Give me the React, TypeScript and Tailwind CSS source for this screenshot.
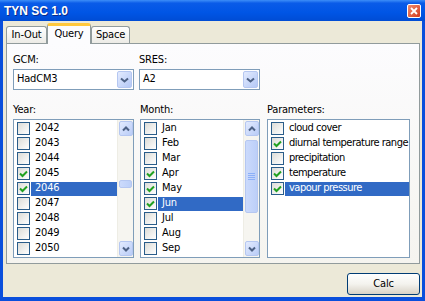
import React from 'react';

const years = [
  { label: '2042' },
  { label: '2043' },
  { label: '2044' },
  { label: '2045', checked: true },
  { label: '2046', checked: true, selected: true },
  { label: '2047' },
  { label: '2048' },
  { label: '2049' },
  { label: '2050' },
];

const months = [
  { label: 'Jan' },
  { label: 'Feb' },
  { label: 'Mar' },
  { label: 'Apr', checked: true },
  { label: 'May', checked: true },
  { label: 'Jun', checked: true, selected: true },
  { label: 'Jul' },
  { label: 'Aug' },
  { label: 'Sep' },
];

const params = [
  { label: 'cloud cover' },
  { label: 'diurnal temperature range', checked: true },
  { label: 'precipitation' },
  { label: 'temperature', checked: true },
  { label: 'vapour pressure', checked: true, selected: true },
];

type Item = { label: string; checked?: boolean; selected?: boolean };

function CheckBox({ checked }: { checked?: boolean }) {
  return (
    <div className="w-[13px] h-[13px] shrink-0 border border-[#2a5d8a] bg-gradient-to-br from-[#dcdcd7] to-white flex items-center justify-center">
      {checked && (
        <svg width="11" height="11" viewBox="0 0 11 11">
          <path d="M2 5.5 L4.5 8 L9 3.5" stroke="#21a121" strokeWidth="2" fill="none" />
        </svg>
      )}
    </div>
  );
}

function Row({ item }: { item: Item }) {
  return (
    <div className="h-[15px] flex items-center pl-[3px]">
      <CheckBox checked={item.checked} />
      <div
        className={
          item.selected
            ? 'ml-[1px] flex-1 h-[14px] pl-[4px] flex items-center bg-[#316ac5] text-white whitespace-nowrap'
            : 'ml-[1px] flex-1 h-[14px] pl-[4px] flex items-center whitespace-nowrap'
        }
      >
        {item.label}
      </div>
    </div>
  );
}

function ArrowBtn({ down }: { down?: boolean }) {
  return (
    <div className="h-[17px] w-[16px] p-px shrink-0">
      <div className="h-full w-full rounded-[2px] border border-[#b5c7f1] bg-gradient-to-br from-[#e3ebfe] to-[#b9ccf7] flex items-center justify-center">
        <svg width="8" height="6" viewBox="0 0 8 6">
          <path d={down ? 'M1 1.5 L4 4.5 L7 1.5' : 'M1 4.5 L4 1.5 L7 4.5'} stroke="#4d6185" strokeWidth="2" fill="none" />
        </svg>
      </div>
    </div>
  );
}

function ScrollBar({ thumb, grip }: { thumb: string; grip?: boolean }) {
  return (
    <div className="w-[16px] flex flex-col bg-[#f6f5f0] border-l border-[#eeede5]">
      <ArrowBtn />
      <div className="flex-1 px-px">
        <div className={thumb + ' rounded-[2px] border border-[#b5c7f1] bg-gradient-to-r from-[#cbdafc] to-[#bccff8] flex flex-col items-center justify-center gap-px'}>
          {grip && (
            <>
              <div className="w-[7px] h-px bg-[#8cb0f8]" />
              <div className="w-[7px] h-px bg-[#8cb0f8]" />
              <div className="w-[7px] h-px bg-[#8cb0f8]" />
              <div className="w-[7px] h-px bg-[#8cb0f8]" />
            </>
          )}
        </div>
      </div>
      <ArrowBtn down />
    </div>
  );
}

function ListBox({ items, width, scroll }: { items: Item[]; width: string; scroll?: React.ReactNode }) {
  return (
    <div className={width + ' h-[139px] border border-[#7f9db9] bg-white flex'}>
      <div className="flex-1 py-px min-w-0">
        {items.map((it) => (
          <Row key={it.label} item={it} />
        ))}
      </div>
      {scroll}
    </div>
  );
}

function Combo({ value }: { value: string }) {
  return (
    <div className="w-[121px] h-[21px] border border-[#7f9db9] bg-white flex items-center">
      <div className="flex-1 pl-[3px]">{value}</div>
      <div className="h-[19px] w-[17px] p-px">
        <div className="h-full w-full rounded-[2px] border border-[#b5c7f1] bg-gradient-to-br from-[#e3ebfe] to-[#b4c8f6] flex items-center justify-center">
          <svg width="9" height="6" viewBox="0 0 9 6">
            <path d="M1 1.5 L4.5 4.5 L8 1.5" stroke="#4d6185" strokeWidth="2" fill="none" />
          </svg>
        </div>
      </div>
    </div>
  );
}

export default function App() {
  return (
    <div className="w-[425px] h-[301px] flex flex-col bg-[#0a4fdc] text-[11px] tracking-[-0.2px] text-black font-['DejaVu_Sans_Condensed','Liberation_Sans',sans-serif] select-none">
      {/* title bar */}
      <div className="h-[21px] shrink-0 flex items-center pl-[4px] pr-[4px] bg-[linear-gradient(to_bottom,#3d8ef8_0%,#0a5be8_15%,#0055e5_60%,#004cd4_100%)]">
        <span className="flex-1 text-white font-bold text-[12px] tracking-normal font-['Liberation_Sans',sans-serif] [text-shadow:1px_1px_0_#0a2a8a]">TYN SC 1.0</span>
        <div className="w-[14px] h-[14px] rounded-[2px] border border-white bg-gradient-to-br from-[#f08a6c] to-[#d2381a] flex items-center justify-center">
          <svg width="8" height="8" viewBox="0 0 8 8">
            <path d="M1 1 L7 7 M7 1 L1 7" stroke="white" strokeWidth="1.8" />
          </svg>
        </div>
      </div>

      {/* body */}
      <div className="flex-1 mx-[3px] mb-[4px] bg-[#ece9d8] flex flex-col">
        {/* tabs */}
        <div className="h-[22px] pl-[3px] flex items-end">
          <div className="w-[41px] h-[17px] rounded-t-[3px] border border-b-0 border-[#919b9c] bg-gradient-to-b from-white to-[#ecebe6] flex items-center justify-center">In-Out</div>
          <div className="w-[44px] h-[21px] -mb-px z-10 rounded-t-[3px] border-x border-[#919b9c] border-t-[3px] border-t-[#ffc83c] bg-[#fcfcfe] flex items-center justify-center pb-[2px]">Query</div>
          <div className="w-[39px] h-[17px] rounded-t-[3px] border border-b-0 border-[#919b9c] bg-gradient-to-b from-white to-[#ecebe6] flex items-center justify-center">Space</div>
        </div>

        {/* panel */}
        <div className="h-[221px] ml-[3px] mr-[2px] border border-[#919b9c] bg-gradient-to-b from-[#fcfcfe] to-[#f5f4ef] pl-[6px] pt-[9px]">
          <div className="flex gap-[5px]">
            <div>
              <div className="h-[13px] leading-[13px] mb-[3px]">GCM:</div>
              <Combo value="HadCM3" />
            </div>
            <div>
              <div className="h-[13px] leading-[13px] mb-[3px]">SRES:</div>
              <Combo value="A2" />
            </div>
          </div>

          <div className="flex mt-[13px]">
            <div>
              <div className="h-[13px] leading-[13px] mb-[3px]">Year:</div>
              <ListBox items={years} width="w-[121px]" scroll={<ScrollBar thumb="mt-[43px] h-[8px]" />} />
            </div>
            <div className="ml-[6px]">
              <div className="h-[13px] leading-[13px] mb-[3px]">Month:</div>
              <ListBox items={months} width="w-[120px]" scroll={<ScrollBar thumb="mt-[3px] h-[73px]" grip />} />
            </div>
            <div className="ml-[7px]">
              <div className="h-[13px] leading-[13px] mb-[3px]">Parameters:</div>
              <div className="tracking-[-0.5px]">
                <ListBox items={params} width="w-[143px]" />
              </div>
            </div>
          </div>
        </div>

        {/* footer */}
        <div className="flex justify-end pr-[2px] pt-[9px]">
          <button className="w-[73px] h-[22px] rounded-[3px] border border-[#003c74] bg-gradient-to-b from-white via-[#f4f3ee] to-[#d8d2c6] flex items-center justify-center">
            Calc
          </button>
        </div>
      </div>
    </div>
  );
}
